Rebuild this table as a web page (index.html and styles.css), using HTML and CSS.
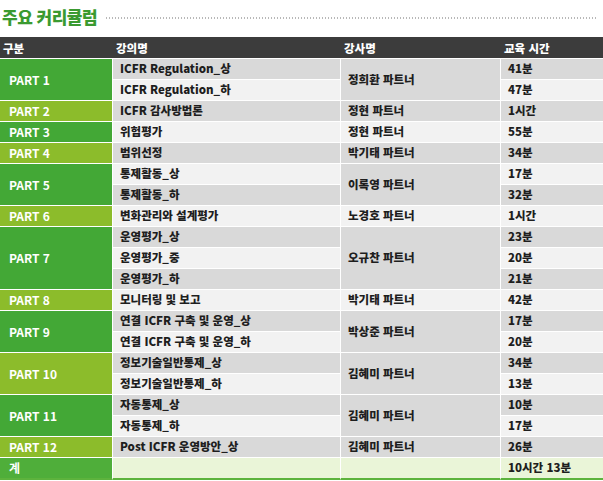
FILE: index.html
```html
<!DOCTYPE html>
<html lang="ko">
<head>
<meta charset="utf-8">
<title>주요 커리큘럼</title>
<link rel="stylesheet" href="styles.css">
</head>
<body>
<div class="title-row">
  <h1 class="title">주요 커리큘럼</h1>
  <div class="dots"></div>
</div>
<table class="curri">
  <colgroup>
    <col class="c1"><col class="c2"><col class="c3"><col class="c4">
  </colgroup>
  <thead>
    <tr><th>구분</th><th>강의명</th><th>강사명</th><th>교육 시간</th></tr>
  </thead>
  <tbody>
    <tr class="g"><td class="part dk" rowspan="2">PART 1</td><td>ICFR Regulation_상</td><td class="merged" rowspan="2">정희환 파트너</td><td>41분</td></tr>
    <tr class="l"><td>ICFR Regulation_하</td><td>47분</td></tr>
    <tr class="g"><td class="part lt">PART 2</td><td>ICFR 감사방법론</td><td>정현 파트너</td><td>1시간</td></tr>
    <tr class="l"><td class="part dk">PART 3</td><td>위험평가</td><td>정현 파트너</td><td>55분</td></tr>
    <tr class="g"><td class="part lt">PART 4</td><td>범위선정</td><td>박기태 파트너</td><td>34분</td></tr>
    <tr class="l"><td class="part dk" rowspan="2">PART 5</td><td>통제활동_상</td><td class="merged" rowspan="2">이록영 파트너</td><td>17분</td></tr>
    <tr class="g"><td>통제활동_하</td><td>32분</td></tr>
    <tr class="l"><td class="part lt">PART 6</td><td>변화관리와 설계평가</td><td>노경호 파트너</td><td>1시간</td></tr>
    <tr class="g"><td class="part dk" rowspan="3">PART 7</td><td>운영평가_상</td><td class="merged" rowspan="3">오규찬 파트너</td><td>23분</td></tr>
    <tr class="l"><td>운영평가_중</td><td>20분</td></tr>
    <tr class="g"><td>운영평가_하</td><td>21분</td></tr>
    <tr class="l"><td class="part lt">PART 8</td><td>모니터링 및 보고</td><td>박기태 파트너</td><td>42분</td></tr>
    <tr class="g"><td class="part dk" rowspan="2">PART 9</td><td>연결 ICFR 구축 및 운영_상</td><td class="merged" rowspan="2">박상준 파트너</td><td>17분</td></tr>
    <tr class="l"><td>연결 ICFR 구축 및 운영_하</td><td>20분</td></tr>
    <tr class="g"><td class="part lt" rowspan="2">PART 10</td><td>정보기술일반통제_상</td><td class="merged" rowspan="2">김혜미 파트너</td><td>34분</td></tr>
    <tr class="l"><td>정보기술일반통제_하</td><td>13분</td></tr>
    <tr class="g"><td class="part dk" rowspan="2">PART 11</td><td>자동통제_상</td><td class="merged" rowspan="2">김혜미 파트너</td><td>10분</td></tr>
    <tr class="l"><td>자동통제_하</td><td>17분</td></tr>
    <tr class="g"><td class="part lt">PART 12</td><td>Post ICFR 운영방안_상</td><td>김혜미 파트너</td><td>26분</td></tr>
  </tbody>
  <tfoot>
    <tr class="total"><td class="part tot">계</td><td></td><td></td><td>10시간 13분</td></tr>
  </tfoot>
</table>
</body>
</html>
```

FILE: styles.css
```css
html, body {
  margin: 0;
  padding: 0;
  background: #fff;
}
body {
  width: 603px;
  font-family: "Noto Sans CJK KR", "Noto Sans", sans-serif;
  color: #1e1e1e;
}
.title-row {
  display: flex;
  align-items: center;
  height: 33px;
  padding: 0 5px 4px 2px;
  gap: 9px;
}
.title {
  margin: 0;
  font-size: 17px;
  font-weight: 900;
  color: #3a9a30;
  letter-spacing: -0.5px;
  line-height: 1;
}
.dots {
  flex: 1;
  height: 2px;
  margin-top: 2px;
  background: repeating-linear-gradient(to right, #b8b8b8 0 1px, transparent 1px 3px);
}
.curri {
  width: 603px;
  table-layout: fixed;
  border-collapse: separate;
  border-spacing: 0;
  font-size: 11.5px;
  font-weight: 900;
}
.c1 { width: 113px; }
.c2 { width: 228px; }
.c3 { width: 160px; }
.c4 { width: 102px; }
.curri th {
  background: #3c3c3c;
  color: #fff;
  text-align: left;
  font-weight: 900;
  font-size: 11.5px;
  height: 21px;
  padding: 0 0 0 3px;
  border-bottom: 1px solid #fff;
}
.curri td {
  height: 20px;
  padding: 0 0 0 7px;
  border-right: 1px solid #fff;
  border-bottom: 1px solid #fff;
  vertical-align: middle;
  white-space: nowrap;
  line-height: 1;
}
.curri td:last-child { border-right: 0; }
.g td { background: #d9d9d9; }
.l td { background: #f2f2f2; }
.curri td.merged { background: #d9d9d9; padding-left: 7px; }
.curri td.part {
  color: #fff;
  font-size: 12px;
  font-weight: 700;
  padding-left: 9px;
}
.curri td.dk { background: #43a836; }
.curri td.lt { background: #8cbc2b; }
.total td {
  background: #eaf5d8;
  border-bottom: 2px solid #5db33d;
}
.curri td.tot { background: #4fae3a; }
```
